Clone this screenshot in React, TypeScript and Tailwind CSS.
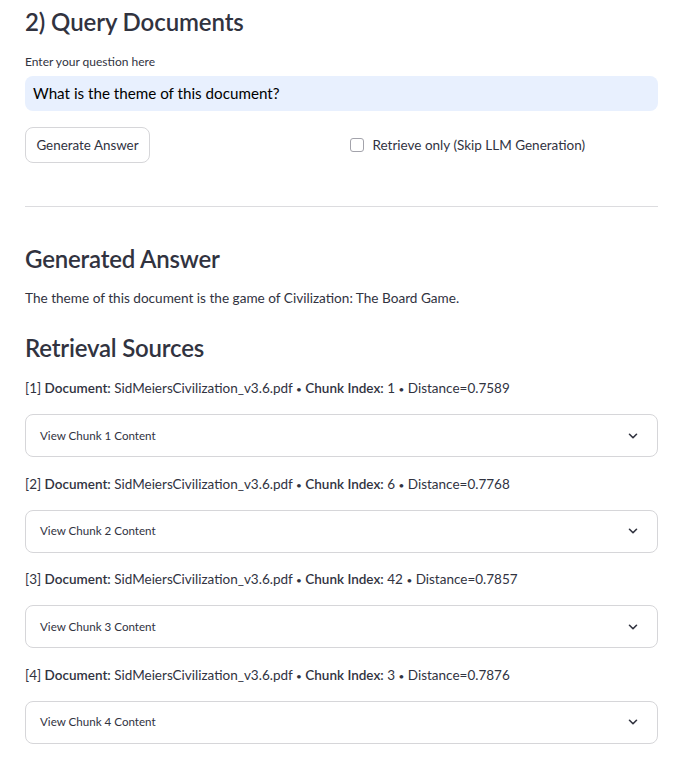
import React from "react";

const sources = [
  { n: 1, file: "SidMeiersCivilization_v3.6.pdf", chunk: 1, dist: "0.7589" },
  { n: 2, file: "SidMeiersCivilization_v3.6.pdf", chunk: 6, dist: "0.7768" },
  { n: 3, file: "SidMeiersCivilization_v3.6.pdf", chunk: 42, dist: "0.7857" },
  { n: 4, file: "SidMeiersCivilization_v3.6.pdf", chunk: 3, dist: "0.7876" },
];

function Chevron() {
  return (
    <svg width="12" height="12" viewBox="0 0 12 12" fill="none">
      <path d="M2.5 4.25 6 7.75l3.5-3.5" stroke="#31333f" strokeWidth="1.6" strokeLinecap="round" strokeLinejoin="round" />
    </svg>
  );
}

// One retrieval hit: metadata line plus a collapsed expander.
function SourceItem({ n, file, chunk, dist }: { n: number; file: string; chunk: number; dist: string }) {
  return (
    <div className={n === 1 ? "mt-2" : "mt-[16.5px]"}>
      <p className="h-5 text-[13.5px] leading-5">
        [{n}] <b className="font-semibold">Document:</b> {file} <span className="text-[10px]">•</span>{" "}
        <b className="font-semibold">Chunk Index:</b> {chunk} <span className="text-[10px]">•</span> Distance={dist}
      </p>
      <div className="mt-4 flex h-[43px] items-center justify-between rounded-lg border border-[#d6d6d9] pl-[14px] pr-[18px]">
        <span className="text-[11.6px]">View Chunk {n} Content</span>
        <Chevron />
      </div>
    </div>
  );
}

export default function App() {
  return (
    <div className="min-h-[776px] bg-white pl-[25px] pr-[20px] text-[#31333f] [font-family:Lato,'Liberation_Sans',sans-serif]">
      <h3 className="h-[44px] text-[24px] font-semibold leading-[44px] tracking-[-0.1px]">2) Query Documents</h3>
      <label className="mt-[10px] block h-4 text-[12px] leading-4">Enter your question here</label>
      <div className="mt-[6px] flex h-[35px] items-center rounded-lg bg-[#e8f0fe] px-2 text-[15.2px] text-black">
        What is the theme of this document?
      </div>
      <div className="mt-4 grid h-9 grid-cols-2 gap-4">
        <div>
          <button className="h-9 w-[125px] rounded-lg border border-[#d6d6d9] bg-white text-[13.4px]">Generate Answer</button>
        </div>
        <label className="flex items-center gap-[9px] text-[13.5px]">
          <span className="h-[14px] w-[14px] rounded-[3px] border border-[#a3a3ab] bg-white" />
          Retrieve only (Skip LLM Generation)
        </label>
      </div>
      <hr className="mt-[43px] border-0 border-t border-[#dcdcdf]" />
      <h3 className="mt-[30px] h-[44px] text-[24px] font-semibold leading-[44px] tracking-[-0.2px]">Generated Answer</h3>
      <p className="mt-[7px] h-5 text-[13.6px] leading-5">
        The theme of this document is the game of Civilization: The Board Game.
      </p>
      <h3 className="mt-[18px] h-[44px] text-[24px] font-semibold leading-[44px] tracking-[-0.2px]">Retrieval Sources</h3>
      <div className="pb-8">
        {sources.map((s) => (
          <SourceItem key={s.n} {...s} />
        ))}
      </div>
    </div>
  );
}
